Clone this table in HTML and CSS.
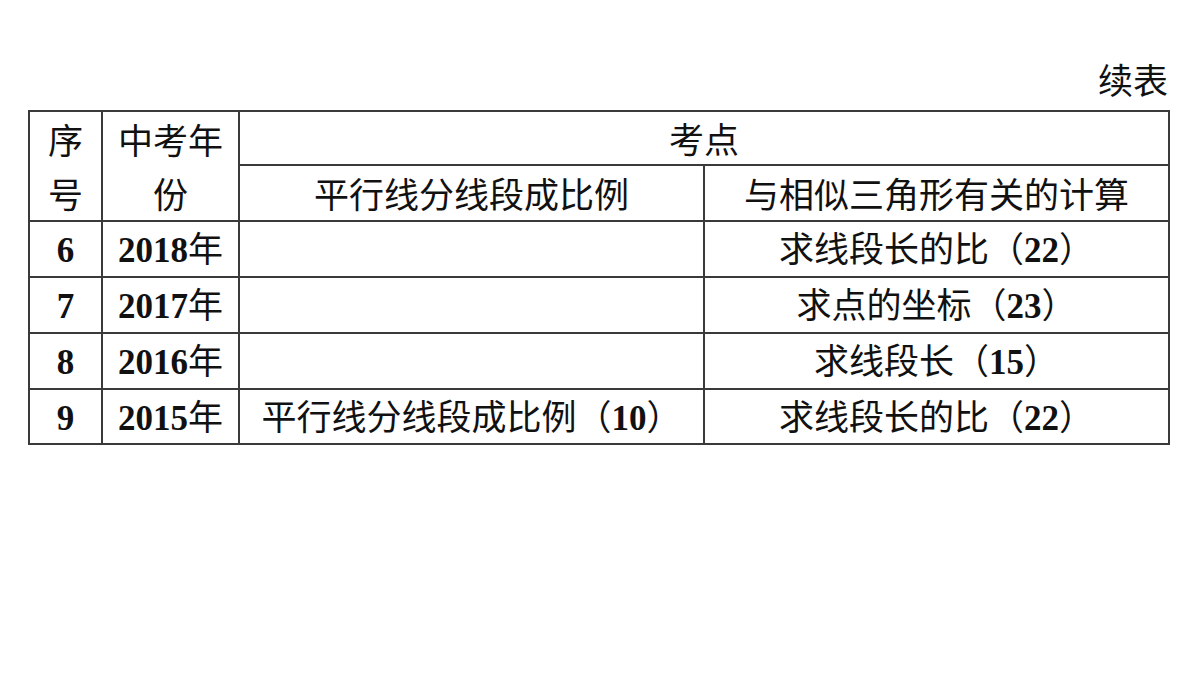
FILE: index.html
```html
<!DOCTYPE html>
<html lang="zh">
<head>
<meta charset="utf-8">
<link rel="stylesheet" href="styles.css">
</head>
<body>
<div class="page">
  <div class="caption">续表</div>
  <table class="grid">
    <colgroup>
      <col class="c1"><col class="c2"><col class="c3"><col class="c4">
    </colgroup>
    <tr class="h1">
      <td rowspan="2" class="stack">序<br>号</td>
      <td rowspan="2" class="stack">中考年<br>份</td>
      <td colspan="2">考点</td>
    </tr>
    <tr class="h2">
      <td>平行线分线段成比例</td>
      <td>与相似三角形有关的计算</td>
    </tr>
    <tr class="r">
      <td><b class="num">6</b></td>
      <td><b class="num">2018</b>年</td>
      <td></td>
      <td>求线段长的比（<b class="num">22</b>）</td>
    </tr>
    <tr class="r">
      <td><b class="num">7</b></td>
      <td><b class="num">2017</b>年</td>
      <td></td>
      <td>求点的坐标（<b class="num">23</b>）</td>
    </tr>
    <tr class="r">
      <td><b class="num">8</b></td>
      <td><b class="num">2016</b>年</td>
      <td></td>
      <td>求线段长（<b class="num">15</b>）</td>
    </tr>
    <tr class="r last">
      <td><b class="num">9</b></td>
      <td><b class="num">2015</b>年</td>
      <td>平行线分线段成比例（<b class="num">10</b>）</td>
      <td>求线段长的比（<b class="num">22</b>）</td>
    </tr>
  </table>
</div>
</body>
</html>
```
FILE: styles.css
```css
html, body {
  margin: 0;
  padding: 0;
  background: #ffffff;
}
body {
  font-family: "Noto Sans CJK SC", "Liberation Serif", serif;
  color: #111;
}
.page {
  padding: 59px 32px 0 28px;
  width: 1140px;
}
.caption {
  text-align: right;
  font-size: 35px;
  line-height: 40px;
  height: 40px;
  margin-bottom: 11px;
  margin-right: 0;
}
.grid {
  border-collapse: collapse;
  table-layout: fixed;
  width: 1140px;
  font-size: 35px;
}
.c1 { width: 73px; }
.c2 { width: 137px; }
.c3 { width: 465px; }
.c4 { width: 465px; }
.grid td {
  border: 2px solid #3a3a3a;
  padding: 0;
  text-align: center;
  vertical-align: middle;
  line-height: 40px;
  white-space: nowrap;
  overflow: hidden;
}
.grid tr.h1 td { height: 51px; }
.grid tr.h2 td { height: 52px; }
.grid tr.r td { height: 54px; }
.grid tr.last td { height: 53px; }
.grid td.stack {
  line-height: 54px;
}
.num {
  font-family: "Liberation Serif", serif;
  font-weight: bold;
  font-size: 35px;
}
```
